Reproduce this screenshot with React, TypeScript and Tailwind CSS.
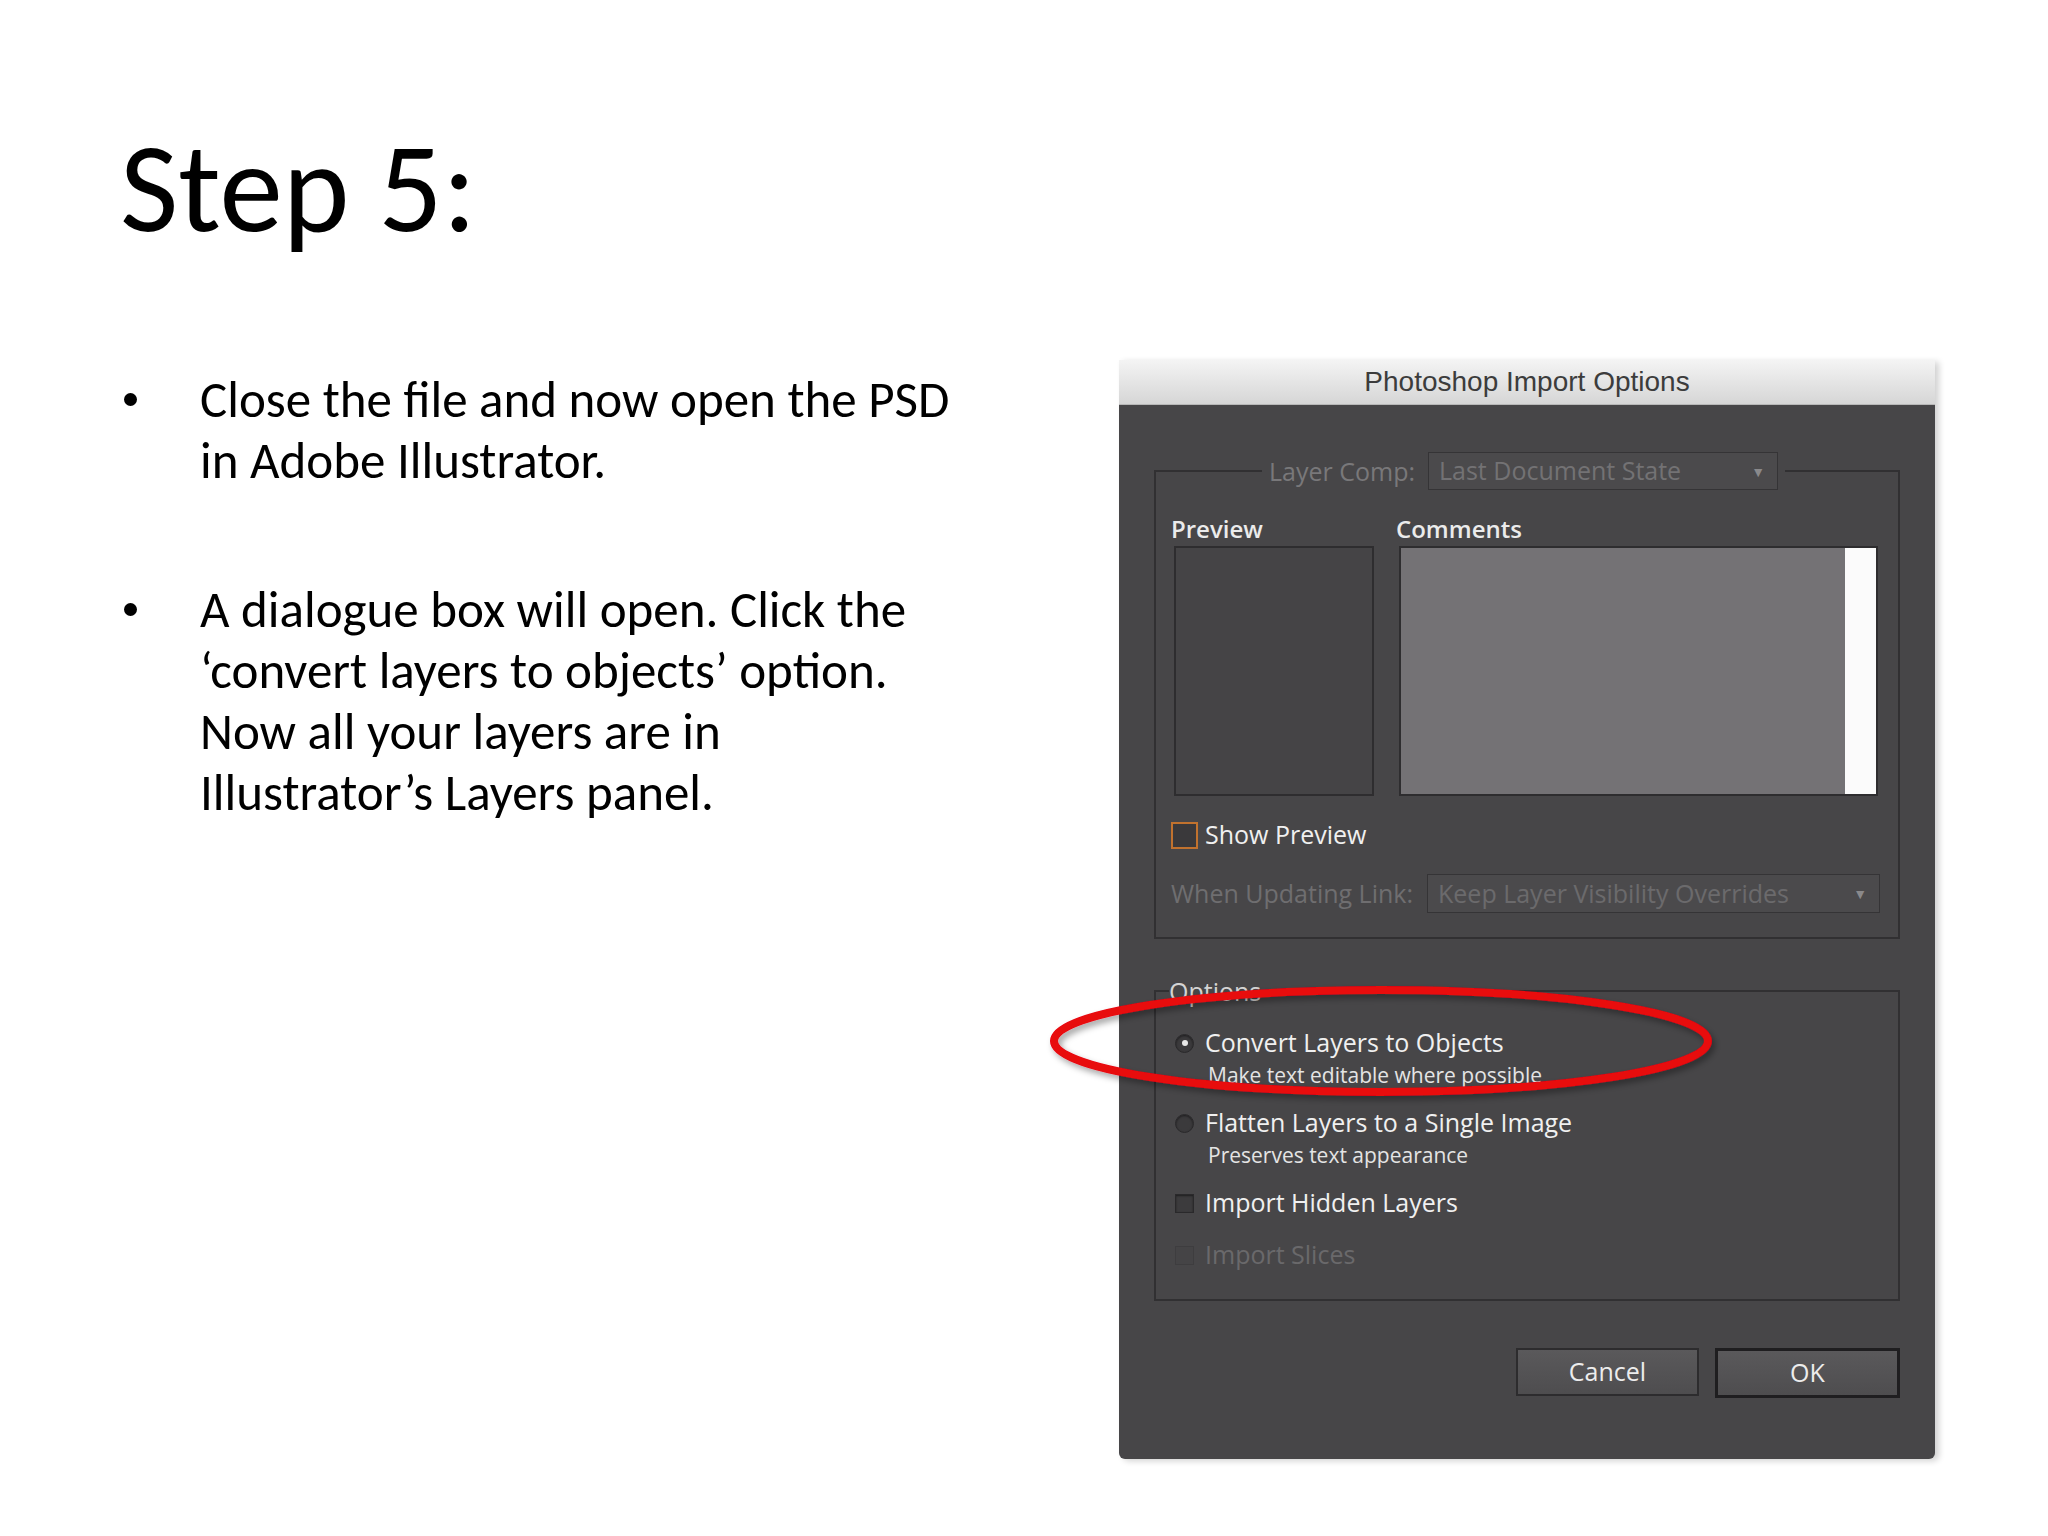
function Radio({ checked }: { checked?: boolean }) {
  return (
    <span className="w-[19px] h-[19px] rounded-full bg-[#3b3a3c] border border-[#2a292b] flex items-center justify-center shrink-0 shadow-[inset_0_1px_2px_rgba(0,0,0,0.5)]">
      {checked && <span className="w-[6px] h-[6px] rounded-full bg-[#e8e8e8]" />}
    </span>
  );
}

function Check({ dim, accent }: { dim?: boolean; accent?: boolean }) {
  return (
    <span
      className={
        accent
          ? "w-[27px] h-[27px] border-2 border-[#c1722e] bg-[#3a393b] shrink-0"
          : dim
            ? "w-[19px] h-[19px] border border-[#3e3d3f] bg-[#454446] shrink-0"
            : "w-[19px] h-[19px] border border-[#2a292b] bg-[#3c3b3d] shrink-0 shadow-[inset_0_1px_2px_rgba(0,0,0,0.5)]"
      }
    />
  );
}

function Dialog() {
  return (
    <div className="w-[816px] h-[1099px] bg-[#474648] flex flex-col rounded-b-[6px] shadow-[4px_2px_6px_rgba(0,0,0,0.18)] font-['Open_Sans',sans-serif]">
      {/* title bar */}
      <div className="h-[45px] bg-gradient-to-b from-[#f4f4f4] to-[#d6d6d6] border-b border-[#b8b8b8] flex items-center justify-center font-['Liberation_Sans',sans-serif] text-[28px] text-[#3c3c3c]">
        Photoshop Import Options
      </div>

      <div className="px-[35px] pt-[47px] flex flex-col">
        {/* layer comp group */}
        <fieldset className="border-2 border-[#313032] p-0 m-0">
          <legend className="ml-[106px] px-[7px] flex items-center">
            <span className="text-[25px] leading-[38px] text-[#79787a]">Layer Comp:</span>
            <span className="ml-[13px] w-[350px] h-[38px] bg-[#4b4a4c] border border-[#353436] flex items-center justify-between pl-[10px] pr-[12px]">
              <span className="text-[25px] text-[#737274]">Last Document State</span>
              <span className="text-[14px] text-[#8a898b]">▼</span>
            </span>
          </legend>

          <div className="px-[18px] pt-[24px] pb-[24px] flex flex-col">
            <div className="flex gap-[25px]">
              <div className="flex flex-col w-[200px]">
                <span className="text-[24px] leading-[30px] font-semibold text-[#ebebeb] -ml-[3px]">Preview</span>
                <div className="mt-[2px] h-[250px] bg-[#454446] border-2 border-[#2e2d2f]" />
              </div>
              <div className="flex flex-col w-[479px]">
                <span className="text-[24px] leading-[30px] font-semibold text-[#ebebeb] -ml-[3px]">Comments</span>
                <div className="mt-[2px] h-[250px] bg-[#747275] border-2 border-[#2e2d2f] flex justify-end">
                  <div className="w-[31px] bg-[#fbfbfb]" />
                </div>
              </div>
            </div>

            <div className="mt-[24px] h-[30px] flex items-center gap-[7px] -ml-[3px]">
              <Check accent />
              <span className="text-[25px] font-medium text-[#f0f0f0]">Show Preview</span>
            </div>

            <div className="mt-[24px] flex items-center">
              <span className="w-[256px] -ml-[3px] text-[25px] text-[#6f6e70]">When Updating Link:</span>
              <span className="flex-1 h-[39px] bg-[#4b4a4c] border border-[#353436] flex items-center justify-between pl-[10px] pr-[12px]">
                <span className="text-[25px] text-[#6b6a6c]">Keep Layer Visibility Overrides</span>
                <span className="text-[14px] text-[#8a898b]">▼</span>
              </span>
            </div>
          </div>
        </fieldset>

        {/* options group */}
        <fieldset className="mt-[37px] border-2 border-[#313032] p-0 m-0">
          <legend className="ml-[13px] text-[25px] leading-[30px] text-[#d4d4d4]">Options</legend>
          <div className="pl-[19px] pt-[21px] pb-[28px] flex flex-col">
            <div className="h-[32px] flex items-center gap-[11px]">
              <Radio checked />
              <span className="text-[25px] font-medium text-[#f0f0f0]">Convert Layers to Objects</span>
            </div>
            <span className="mt-[4px] ml-[33px] h-[24px] leading-[24px] text-[21px] text-[#e4e4e4]">Make text editable where possible</span>

            <div className="mt-[20px] h-[32px] flex items-center gap-[11px]">
              <Radio />
              <span className="text-[25px] font-medium text-[#f0f0f0]">Flatten Layers to a Single Image</span>
            </div>
            <span className="mt-[4px] ml-[33px] h-[24px] leading-[24px] text-[21px] text-[#e4e4e4]">Preserves text appearance</span>

            <div className="mt-[20px] h-[32px] flex items-center gap-[11px]">
              <Check />
              <span className="text-[25px] font-medium text-[#f0f0f0]">Import Hidden Layers</span>
            </div>

            <div className="mt-[20px] h-[32px] flex items-center gap-[11px]">
              <Check dim />
              <span className="text-[25px] text-[#6a696b]">Import Slices</span>
            </div>
          </div>
        </fieldset>

        {/* buttons */}
        <div className="mt-[47px] flex justify-end gap-[16px]">
          <button className="w-[183px] h-[48px] bg-gradient-to-b from-[#5a595b] to-[#4e4d4f] border-2 border-[#2d2c2e] text-[25px] text-[#ececec]">
            Cancel
          </button>
          <button className="w-[185px] h-[50px] bg-gradient-to-b from-[#5a595b] to-[#4e4d4f] border-[3px] border-[#1f1e20] text-[25px] text-[#ececec]">
            OK
          </button>
        </div>
      </div>
    </div>
  );
}

export default function App() {
  return (
    <div className="relative w-[2048px] h-[1536px] bg-white flex overflow-hidden">
      {/* left: slide text */}
      <div className="w-[1119px] pl-[120px] pt-[124px] flex flex-col font-['Carlito','Open_Sans',sans-serif] text-black">
        <h1 className="text-[127px] leading-none">Step 5:</h1>

        <ul className="mt-[118px] flex flex-col gap-[88px] text-[51px] leading-[61px]">
          <li className="flex">
            <span className="w-[80px] h-[61px] shrink-0 flex items-center">
              <span className="ml-[4px] w-[13px] h-[13px] rounded-full bg-black" />
            </span>
            <span>
              Close the file and now open the PSD
              <br />
              in Adobe Illustrator.
            </span>
          </li>
          <li className="flex">
            <span className="w-[80px] h-[61px] shrink-0 flex items-center">
              <span className="ml-[4px] w-[13px] h-[13px] rounded-full bg-black" />
            </span>
            <span>
              A dialogue box will open. Click the
              <br />
              ‘convert layers to objects’ option.
              <br />
              Now all your layers are in
              <br />
              Illustrator’s Layers panel.
            </span>
          </li>
        </ul>
      </div>

      {/* right: dialog */}
      <div className="pt-[360px]">
        <Dialog />
      </div>

      {/* red highlight ellipse */}
      <svg className="absolute left-0 top-0 pointer-events-none" width="2048" height="1536">
        <defs>
          <filter id="sh" x="-10%" y="-30%" width="120%" height="160%">
            <feDropShadow dx="3" dy="4" stdDeviation="3" floodColor="#000" floodOpacity="0.35" />
          </filter>
        </defs>
        <ellipse cx="1381" cy="1041" rx="327" ry="51" fill="none" stroke="#e8070f" strokeWidth="8" filter="url(#sh)" />
      </svg>
    </div>
  );
}
